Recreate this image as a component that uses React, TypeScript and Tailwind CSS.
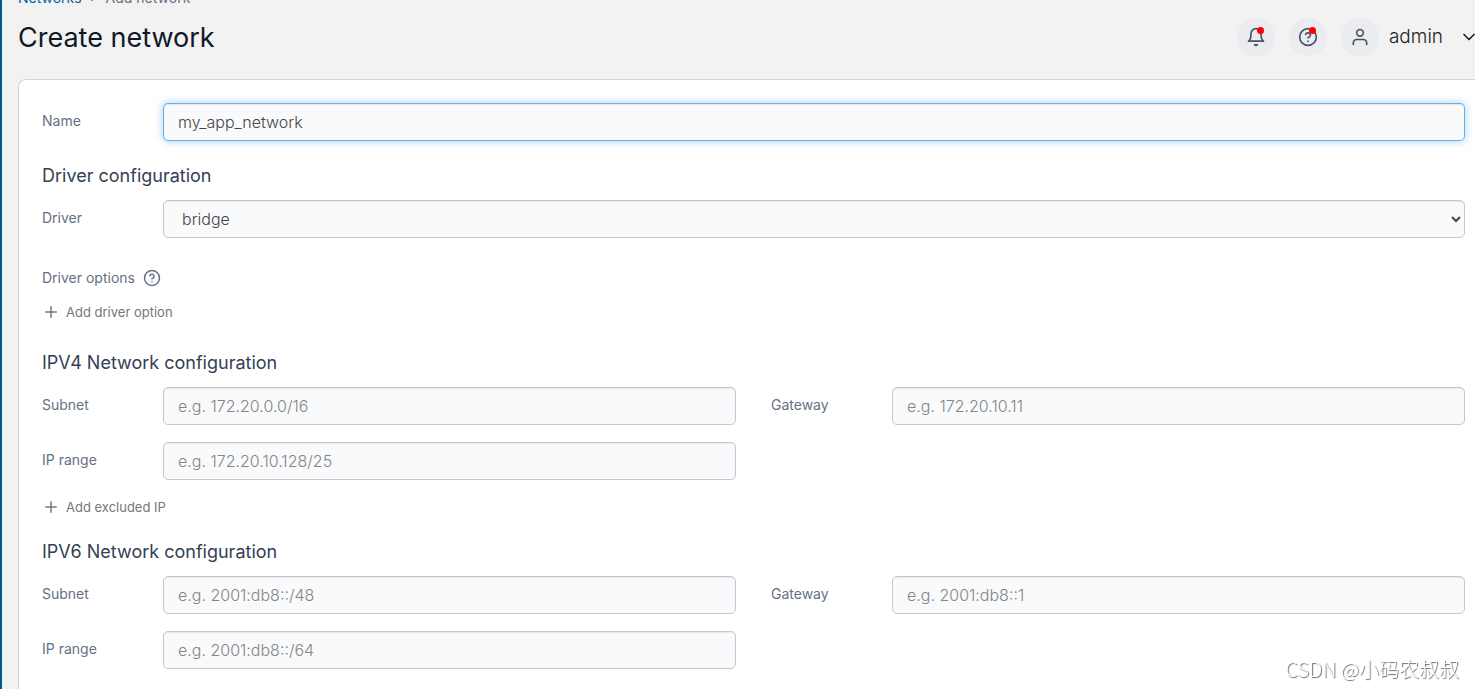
import { useState, useId } from "react";
import { FiBell, FiChevronDown, FiHelpCircle, FiPlus, FiUser } from "react-icons/fi";

const inputClass =
  "h-[38px] w-full min-w-0 rounded-[5px] border border-[#c6c8cc] bg-[#f9fafc] px-3.5 text-base font-light text-[#444444] outline-none shadow-[inset_0_1px_1px_rgba(0,0,0,0.075)] placeholder:text-[#858585] focus:border-[#66afe9] focus:shadow-[inset_0_1px_1px_rgba(0,0,0,0.075),0_0_8px_rgba(102,175,233,0.6)]";

interface FieldProps {
  label: string;
  placeholder?: string;
  defaultValue?: string;
  autoFocus?: boolean;
}

function Field({ label, placeholder, defaultValue, autoFocus }: FieldProps) {
  const id = useId();
  const [value, setValue] = useState(defaultValue ?? "");

  return (
    <div className="grid grid-cols-[121px_1fr]">
      <label htmlFor={id} className="pt-2 text-sm text-[#667085]">
        {label}
      </label>
      <input
        id={id}
        type="text"
        value={value}
        onChange={(e) => setValue(e.target.value)}
        placeholder={placeholder}
        className={inputClass}
        autoFocus={autoFocus}
      />
    </div>
  );
}

function SectionTitle({ children }: { children: React.ReactNode }) {
  return <h2 className="text-lg leading-6 text-[#344054]">{children}</h2>;
}

function AddButton({ children }: { children: React.ReactNode }) {
  return (
    <button
      type="button"
      className="flex cursor-pointer items-center gap-1.5 text-[13px] leading-5 text-[#767676]"
    >
      <FiPlus className="size-[18px]" strokeWidth={2} aria-hidden />
      {children}
    </button>
  );
}

interface NetworkSectionProps {
  title: string;
  subnet: string;
  gateway: string;
  range: string;
}

function NetworkSection({ title, subnet, gateway, range }: NetworkSectionProps) {
  return (
    <section>
      <SectionTitle>{title}</SectionTitle>
      <div className="mt-3 grid grid-cols-2 gap-x-[35px] gap-y-[17px]">
        <Field label="Subnet" placeholder={subnet} />
        <Field label="Gateway" placeholder={gateway} />
        <Field label="IP range" placeholder={range} />
      </div>
      <div className="mt-[17px]">
        <AddButton>Add excluded IP</AddButton>
      </div>
    </section>
  );
}

function HeaderButton({
  label,
  dot,
  children,
}: {
  label: string;
  dot?: boolean;
  children: React.ReactNode;
}) {
  return (
    <button
      type="button"
      aria-label={label}
      className="relative flex size-[38px] cursor-pointer items-center justify-center rounded-full bg-[#eaecf0] text-[#475467]"
    >
      {children}
      {dot && <span className="absolute top-[9px] right-[11px] size-[7px] rounded-full bg-[#ff0000]" />}
    </button>
  );
}

function Header() {
  return (
    <header className="flex items-start justify-between">
      <div>
        <nav className="-mt-3 flex h-5 items-center gap-2 text-sm text-[#667085]" aria-label="Breadcrumb">
          <a href="#networks" className="text-[#0065a6]">
            Networks
          </a>
          <span className="text-xs">&gt;</span>
          <span>Add network</span>
        </nav>
        <h1 className="mt-3 text-[27px] leading-9 text-[#101828]">Create network</h1>
      </div>
      <div className="-mr-1 mt-[18px] flex items-center gap-3.5">
        <HeaderButton label="Notifications" dot>
          <FiBell className="size-5" />
        </HeaderButton>
        <HeaderButton label="Help" dot>
          <FiHelpCircle className="size-5" />
        </HeaderButton>
        <div className="flex items-center gap-2.5">
          <HeaderButton label="Account">
            <FiUser className="size-5" />
          </HeaderButton>
          <button type="button" className="flex cursor-pointer items-center gap-4 text-[19px] font-light text-[#222222]">
            admin
            <FiChevronDown className="size-5" />
          </button>
        </div>
      </div>
    </header>
  );
}

export default function App() {
  return (
    <div className="min-h-screen overflow-hidden border-l-2 border-[#005a8d] bg-[#f2f2f2] pl-4 font-['Inter',sans-serif]">
      <Header />
      <form className="mt-[23px] rounded-tl-lg border-t border-l border-[#d0d5dd] bg-white pt-[23px] pr-2.5 pb-1 pl-[23px]">
        <Field label="Name" defaultValue="my_app_network" autoFocus />

        <section className="mt-[23px]">
          <SectionTitle>Driver configuration</SectionTitle>
          <div className="mt-3 grid grid-cols-[121px_1fr]">
            <label htmlFor="driver" className="pt-2 text-sm text-[#667085]">
              Driver
            </label>
            <select id="driver" className={inputClass}>
              <option>bridge</option>
              <option>macvlan</option>
              <option>ipvlan</option>
            </select>
          </div>
          <div className="mt-[30px] flex items-center gap-2 text-sm text-[#667085]">
            Driver options
            <FiHelpCircle className="size-[18px]" />
          </div>
          <div className="mt-3.5">
            <AddButton>Add driver option</AddButton>
          </div>
        </section>

        <div className="mt-[29px] flex flex-col gap-[23px]">
          <NetworkSection
            title="IPV4 Network configuration"
            subnet="e.g. 172.20.0.0/16"
            gateway="e.g. 172.20.10.11"
            range="e.g. 172.20.10.128/25"
          />
          <NetworkSection
            title="IPV6 Network configuration"
            subnet="e.g. 2001:db8::/48"
            gateway="e.g. 2001:db8::1"
            range="e.g. 2001:db8::/64"
          />
        </div>
      </form>
      <div className="fixed right-4 bottom-2 font-['Noto_Sans_CJK_SC',sans-serif] text-xl leading-6 font-light text-white [text-shadow:1px_1px_1px_#666666]">
        CSDN @小码农叔叔
      </div>
    </div>
  );
}
